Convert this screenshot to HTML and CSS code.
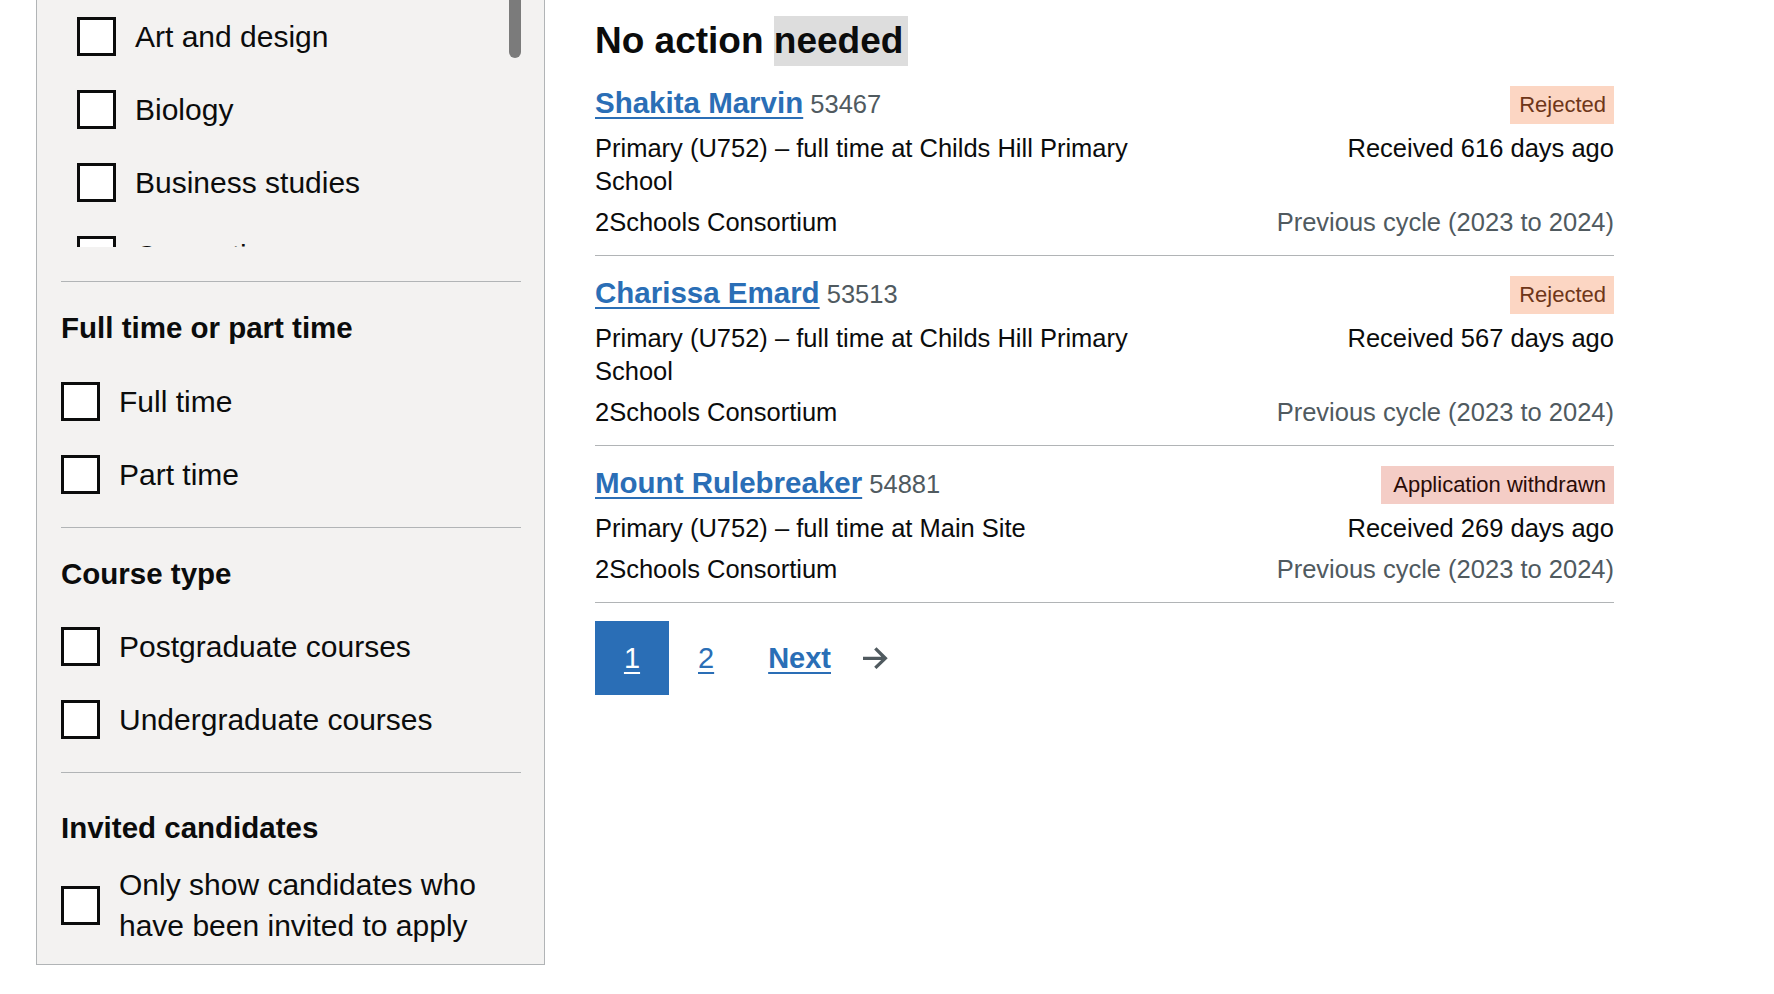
FILE: index.html
```html
<!DOCTYPE html>
<html lang="en">
<head>
<meta charset="utf-8">
<title>Applications</title>
<link rel="stylesheet" href="styles.css">
</head>
<body>
<div class="page">
  <aside class="filter">
    <div class="filter-section filter-section--subjects">
      <div class="subject-window">
        <div class="subject-scroll">
          <div class="check check--subject"><input class="check-input" type="checkbox" id="s1"><label class="check-label" for="s1">Art and design</label></div>
          <div class="check check--subject"><input class="check-input" type="checkbox" id="s2"><label class="check-label" for="s2">Biology</label></div>
          <div class="check check--subject"><input class="check-input" type="checkbox" id="s3"><label class="check-label" for="s3">Business studies</label></div>
          <div class="check check--subject"><input class="check-input" type="checkbox" id="s4"><label class="check-label" for="s4">Computing</label></div>
          <div class="check check--subject"><input class="check-input" type="checkbox" id="s5"><label class="check-label" for="s5">Dance</label></div>
          <div class="check check--subject"><input class="check-input" type="checkbox" id="s6"><label class="check-label" for="s6">Design and technology</label></div>
          <div class="check check--subject"><input class="check-input" type="checkbox" id="s7"><label class="check-label" for="s7">Drama</label></div>
          <div class="check check--subject"><input class="check-input" type="checkbox" id="s8"><label class="check-label" for="s8">Economics</label></div>
          <div class="check check--subject"><input class="check-input" type="checkbox" id="s9"><label class="check-label" for="s9">English</label></div>
          <div class="check check--subject"><input class="check-input" type="checkbox" id="s10"><label class="check-label" for="s10">French</label></div>
          <div class="check check--subject"><input class="check-input" type="checkbox" id="s11"><label class="check-label" for="s11">Geography</label></div>
          <div class="check check--subject"><input class="check-input" type="checkbox" id="s12"><label class="check-label" for="s12">History</label></div>
          <div class="check check--subject"><input class="check-input" type="checkbox" id="s13"><label class="check-label" for="s13">Mathematics</label></div>
          <div class="check check--subject"><input class="check-input" type="checkbox" id="s14"><label class="check-label" for="s14">Primary</label></div>
        </div>
        <div class="subject-thumb" aria-hidden="true"></div>
      </div>
    </div>

    <div class="filter-section">
      <h3 class="filter-heading">Full time or part time</h3>
      <div class="check-list">
        <div class="check"><input class="check-input" type="checkbox" id="f1"><label class="check-label" for="f1">Full time</label></div>
        <div class="check"><input class="check-input" type="checkbox" id="f2"><label class="check-label" for="f2">Part time</label></div>
      </div>
    </div>

    <div class="filter-section">
      <h3 class="filter-heading">Course type</h3>
      <div class="check-list">
        <div class="check"><input class="check-input" type="checkbox" id="c1"><label class="check-label" for="c1">Postgraduate courses</label></div>
        <div class="check"><input class="check-input" type="checkbox" id="c2"><label class="check-label" for="c2">Undergraduate courses</label></div>
      </div>
    </div>

    <div class="filter-section filter-section--last">
      <h3 class="filter-heading filter-heading--invited">Invited candidates</h3>
      <div class="check check--multi"><input class="check-input" type="checkbox" id="i1"><label class="check-label" for="i1">Only show candidates who have been invited to apply</label></div>
    </div>
  </aside>

  <main class="main">
    <h2 class="results-heading">No action <span class="mark">needed</span></h2>

    <ul class="apps">
      <li class="app">
        <div class="app-name"><a class="app-link" href="#">Shakita Marvin</a> <span class="app-id">53467</span></div>
        <div class="app-status"><strong class="tag tag--orange">Rejected</strong></div>
        <p class="app-text">Primary (U752) – full time at Childs Hill Primary School</p>
        <p class="app-text app-right">Received 616 days ago</p>
        <p class="app-text">2Schools Consortium</p>
        <p class="app-text app-right app-muted">Previous cycle (2023 to 2024)</p>
      </li>
      <li class="app">
        <div class="app-name"><a class="app-link" href="#">Charissa Emard</a> <span class="app-id">53513</span></div>
        <div class="app-status"><strong class="tag tag--orange">Rejected</strong></div>
        <p class="app-text">Primary (U752) – full time at Childs Hill Primary School</p>
        <p class="app-text app-right">Received 567 days ago</p>
        <p class="app-text">2Schools Consortium</p>
        <p class="app-text app-right app-muted">Previous cycle (2023 to 2024)</p>
      </li>
      <li class="app">
        <div class="app-name"><a class="app-link" href="#">Mount Rulebreaker</a> <span class="app-id">54881</span></div>
        <div class="app-status"><strong class="tag tag--red">Application withdrawn</strong></div>
        <p class="app-text">Primary (U752) – full time at Main Site</p>
        <p class="app-text app-right">Received 269 days ago</p>
        <p class="app-text">2Schools Consortium</p>
        <p class="app-text app-right app-muted">Previous cycle (2023 to 2024)</p>
      </li>
    </ul>

    <nav class="pagination" aria-label="Pagination">
      <a class="pagination-current" href="#" aria-current="page">1</a>
      <a class="pagination-link" href="#">2</a>
      <a class="pagination-next" href="#">Next</a>
      <svg class="pagination-arrow" xmlns="http://www.w3.org/2000/svg" width="25" height="22" viewBox="0 0 15 13" aria-hidden="true"><path d="m8.107-0.0078125-1.4136 1.414 4.2926 4.293h-12.986v2h12.896l-4.1855 3.9766 1.377 1.4492 6.7441-6.4062-6.7246-6.7266z"/></svg>
    </nav>
  </main>
</div>
</body>
</html>
```
FILE: styles.css
```css
html, body {
  margin: 0;
  padding: 0;
  background: #ffffff;
}

body {
  font-family: "Liberation Sans", Arial, sans-serif;
  color: #0b0c0c;
}

.page {
  display: flex;
  align-items: flex-start;
  padding-left: 36px;
}

/* ---------- Filter panel ---------- */

.filter {
  width: 509px;
  box-sizing: border-box;
  flex: none;
  background: #f3f2f1;
  border: 1px solid #b1b4b6;
  border-top: none;
  padding: 0 23px 18px 24px;
}

.filter-section {
  border-bottom: 1px solid #b1b4b6;
  padding: 28px 0 32px;
}

.filter-section--subjects {
  padding: 0 0 34px;
}

.filter-section--last {
  border-bottom: none;
  padding: 37px 0 0;
}

.subject-window {
  position: relative;
}

.subject-scroll {
  height: 247px;
  overflow: hidden;
  padding-top: 16px;
  box-sizing: border-box;
  display: flex;
  flex-direction: column;
  gap: 32px;
}

.subject-thumb {
  position: absolute;
  top: 0;
  right: 0;
  width: 12px;
  height: 58px;
  background: #7b7b7b;
  border-radius: 0 0 6px 6px;
}

.filter-heading {
  margin: 0;
  font-size: 29.5px;
  line-height: 36px;
  font-weight: 700;
}

.filter-heading--invited {
  margin-bottom: 18px;
}

.check-list {
  margin-top: 34.5px;
  display: flex;
  flex-direction: column;
  gap: 32px;
}

.check {
  display: flex;
  align-items: center;
  gap: 19px;
  min-height: 40px;
  flex: none;
}

.check--subject {
  padding-left: 16px;
}

.check-input {
  appearance: none;
  -webkit-appearance: none;
  margin: 0;
  width: 39px;
  height: 39px;
  flex: none;
  box-sizing: border-box;
  border: 3px solid #0b0c0c;
  background: #ffffff;
  border-radius: 0;
}

.check-label {
  font-size: 30px;
  line-height: 41px;
}

.check--multi .check-label {
  max-width: 360px;
}

/* ---------- Main results ---------- */

.main {
  margin-left: 50px;
  width: 1019px;
  flex: none;
}

.results-heading {
  margin: 16px 0 0;
  font-size: 37px;
  line-height: 50px;
  font-weight: 700;
}

.mark {
  display: inline-block;
  background: #dddddd;
  padding: 0 5px 0 0;
  line-height: 50px;
}

.apps {
  list-style: none;
  margin: 0;
  padding: 0;
}

.app {
  display: grid;
  grid-template-columns: 560px 1fr;
  row-gap: 8px;
  padding: 18px 0 16px;
  border-bottom: 1px solid #b1b4b6;
}

.app-name {
  align-self: start;
  line-height: 38px;
  font-size: 25.5px;
}

.app-link {
  font-size: 29.5px;
  font-weight: 700;
  color: #2a6eb6;
  text-decoration: underline;
  text-decoration-thickness: 2px;
  text-underline-offset: 4px;
}

.app-id {
  color: #505a5f;
}

.app-status {
  justify-self: end;
  align-self: end;
  padding-top: 2px;
}

.tag {
  display: block;
  font-size: 22px;
  line-height: 26px;
  font-weight: 400;
  padding: 6px 8px 6px 9px;
}

.tag--orange {
  background: #fcd6c3;
  color: #6e3619;
}

.tag--red {
  background: #f4cdc6;
  color: #2a0b06;
  padding: 6px 8px 6px 12px;
}

.app-text {
  margin: 0;
  font-size: 25.5px;
  line-height: 33px;
}

.app-right {
  justify-self: end;
  text-align: right;
}

.app-muted {
  color: #505a5f;
}

/* ---------- Pagination ---------- */

.pagination {
  display: flex;
  align-items: center;
  margin-top: 18px;
}

.pagination-current {
  width: 74px;
  height: 74px;
  display: flex;
  align-items: center;
  justify-content: center;
  background: #2a6eb6;
  color: #ffffff;
  font-size: 29px;
  text-decoration: underline;
  text-decoration-thickness: 2px;
  text-underline-offset: 4px;
}

.pagination-link {
  margin-left: 29px;
  color: #2a6eb6;
  font-size: 29px;
  text-decoration: underline;
  text-decoration-thickness: 2px;
  text-underline-offset: 4px;
}

.pagination-next {
  margin-left: 54px;
  color: #2a6eb6;
  font-size: 29px;
  font-weight: 700;
  text-decoration: underline;
  text-decoration-thickness: 2px;
  text-underline-offset: 4px;
}

.pagination-arrow {
  margin-left: 32px;
  fill: #505a5f;
}
```
